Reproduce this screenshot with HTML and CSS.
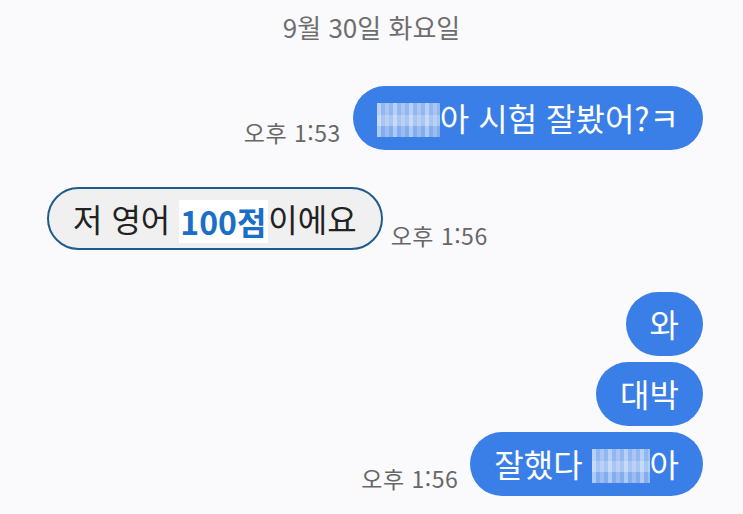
FILE: index.html
```html
<!DOCTYPE html>
<html lang="ko">

<head>
    <meta charset="UTF-8">
    <meta name="viewport" content="width=device-width, initial-scale=1.0">
    <title>채팅</title>
    <link rel="stylesheet" href="styles.css">
</head>

<body>
    <section class="chat">
        <div class="date">9월 30일 화요일</div>

        <div class="row me first">
            <span class="time">오후 1:53</span>
            <div class="bubble blue"><span class="mosaic m1"></span>아 시험 잘봤어?ㅋ</div>
        </div>

        <div class="row you">
            <div class="bubble gray">저 영어 <b class="mark">100점</b>이에요</div>
            <span class="time">오후 1:56</span>
        </div>

        <div class="row me gap">
            <div class="bubble blue">와</div>
        </div>
        <div class="row me">
            <div class="bubble blue">대박</div>
        </div>
        <div class="row me">
            <span class="time">오후 1:56</span>
            <div class="bubble blue">잘했다 <span class="mosaic m2"></span>아</div>
        </div>
    </section>
</body>

</html>
```

FILE: styles.css
```css
* {
    box-sizing: border-box;
}

body {
    margin: 0;
    background-color: #fafafc;
    font-family: "Noto Sans CJK KR", "Noto Sans", sans-serif;
}

.chat {
    width: 743px;
    height: 514px;
    padding: 9px 40px 0 47px;
    display: flex;
    flex-direction: column;
    overflow: hidden;
}

.date {
    text-align: center;
    font-size: 26px;
    line-height: 36px;
    color: #6e6e6e;
    margin-right: 7px;
}

.row {
    display: flex;
    align-items: flex-end;
    margin-top: 6px;
}

.row.first {
    margin-top: 41px;
}

.row.you {
    margin-top: 37px;
}

.row.gap {
    margin-top: 42px;
}

.me {
    justify-content: flex-end;
}

.bubble {
    height: 64px;
    padding: 0 24px;
    border-radius: 32px;
    font-size: 32px;
    line-height: 62px;
    white-space: nowrap;
}

.blue {
    background-color: #3a7ee8;
    color: #fff;
}

.gray {
    background-color: #f0f0f0;
    color: #222;
    border: 2px solid #1f5b8c;
    height: 63px;
    line-height: 58px;
    padding: 0 24px;
}

.mark {
    display: inline-block;
    background-color: #fff;
    color: #1a6fc6;
    font-weight: 700;
    line-height: 43px;
    padding: 0 2px 0 1px;
    vertical-align: middle;
    margin-top: -4px;
}

.time {
    font-size: 23px;
    letter-spacing: 0.5px;
    color: #676767;
    line-height: 30px;
    padding-bottom: 3px;
}

.me .time {
    margin-right: 12px;
}

.you .time {
    margin-left: 8px;
    padding-bottom: 0;
}

.mosaic {
    display: inline-block;
    height: 34px;
    vertical-align: middle;
    margin-top: -4px;
    background-color: #a9c6f3;
    background-image:
        linear-gradient(90deg, rgba(255,255,255,0.35) 25%, transparent 25%, transparent 50%, rgba(255,255,255,0.2) 50%, rgba(255,255,255,0.2) 75%, transparent 75%),
        linear-gradient(0deg, rgba(58,126,232,0.35) 33%, transparent 33%, transparent 66%, rgba(58,126,232,0.2) 66%);
    background-size: 16px 12px, 12px 34px;
}

.m1 {
    width: 63px;
}

.m2 {
    width: 58px;
}
```
